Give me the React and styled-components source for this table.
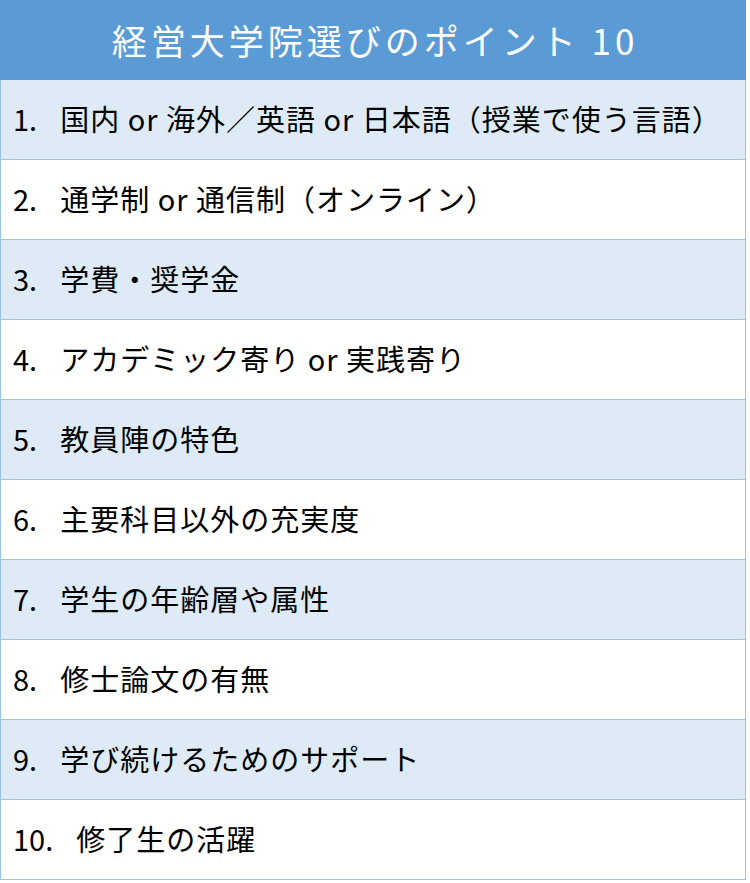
import React from "react";
import styled, { createGlobalStyle } from "styled-components";

const Global = createGlobalStyle`
  html, body { margin: 0; padding: 0; background: #ffffff; }
  body { font-family: "Noto Sans CJK JP", "Noto Sans", sans-serif; }
`;

const Table = styled.div`
  width: 746px;
  display: flex;
  flex-direction: column;
`;

const Header = styled.div`
  height: 80px;
  background: #5b9bd5;
  color: #ffffff;
  display: flex;
  align-items: center;
  justify-content: center;
  font-size: 35px;
  letter-spacing: 4px;
  box-sizing: border-box;
  padding-left: 4px;
  padding-bottom: 2px;
`;

const Row = styled.div`
  height: 80px;
  box-sizing: border-box;
  display: flex;
  align-items: center;
  padding-left: 12px;
  padding-bottom: 4px;
  background: ${(p) => (p.$shade ? "#deebf7" : "#ffffff")};
  border-left: 1px solid #9dc3e6;
  border-right: 1px solid #9dc3e6;
  border-bottom: 1px solid #9dc3e6;
  color: #000000;
  font-size: 29px;
  letter-spacing: 1px;
  white-space: nowrap;
`;

const Num = styled.span`
  margin-right: 23px;
  letter-spacing: 0;
`;

const items = [
  "国内 or 海外／英語 or 日本語（授業で使う言語）",
  "通学制 or 通信制（オンライン）",
  "学費・奨学金",
  "アカデミック寄り or 実践寄り",
  "教員陣の特色",
  "主要科目以外の充実度",
  "学生の年齢層や属性",
  "修士論文の有無",
  "学び続けるためのサポート",
  "修了生の活躍",
];

export default function App() {
  return (
    <>
      <Global />
      <Table>
        <Header>経営大学院選びのポイント 10</Header>
        {items.map((t, i) => (
          <Row key={i} $shade={i % 2 === 0}>
            <Num>{i + 1}.</Num>
            {t}
          </Row>
        ))}
      </Table>
    </>
  );
}
